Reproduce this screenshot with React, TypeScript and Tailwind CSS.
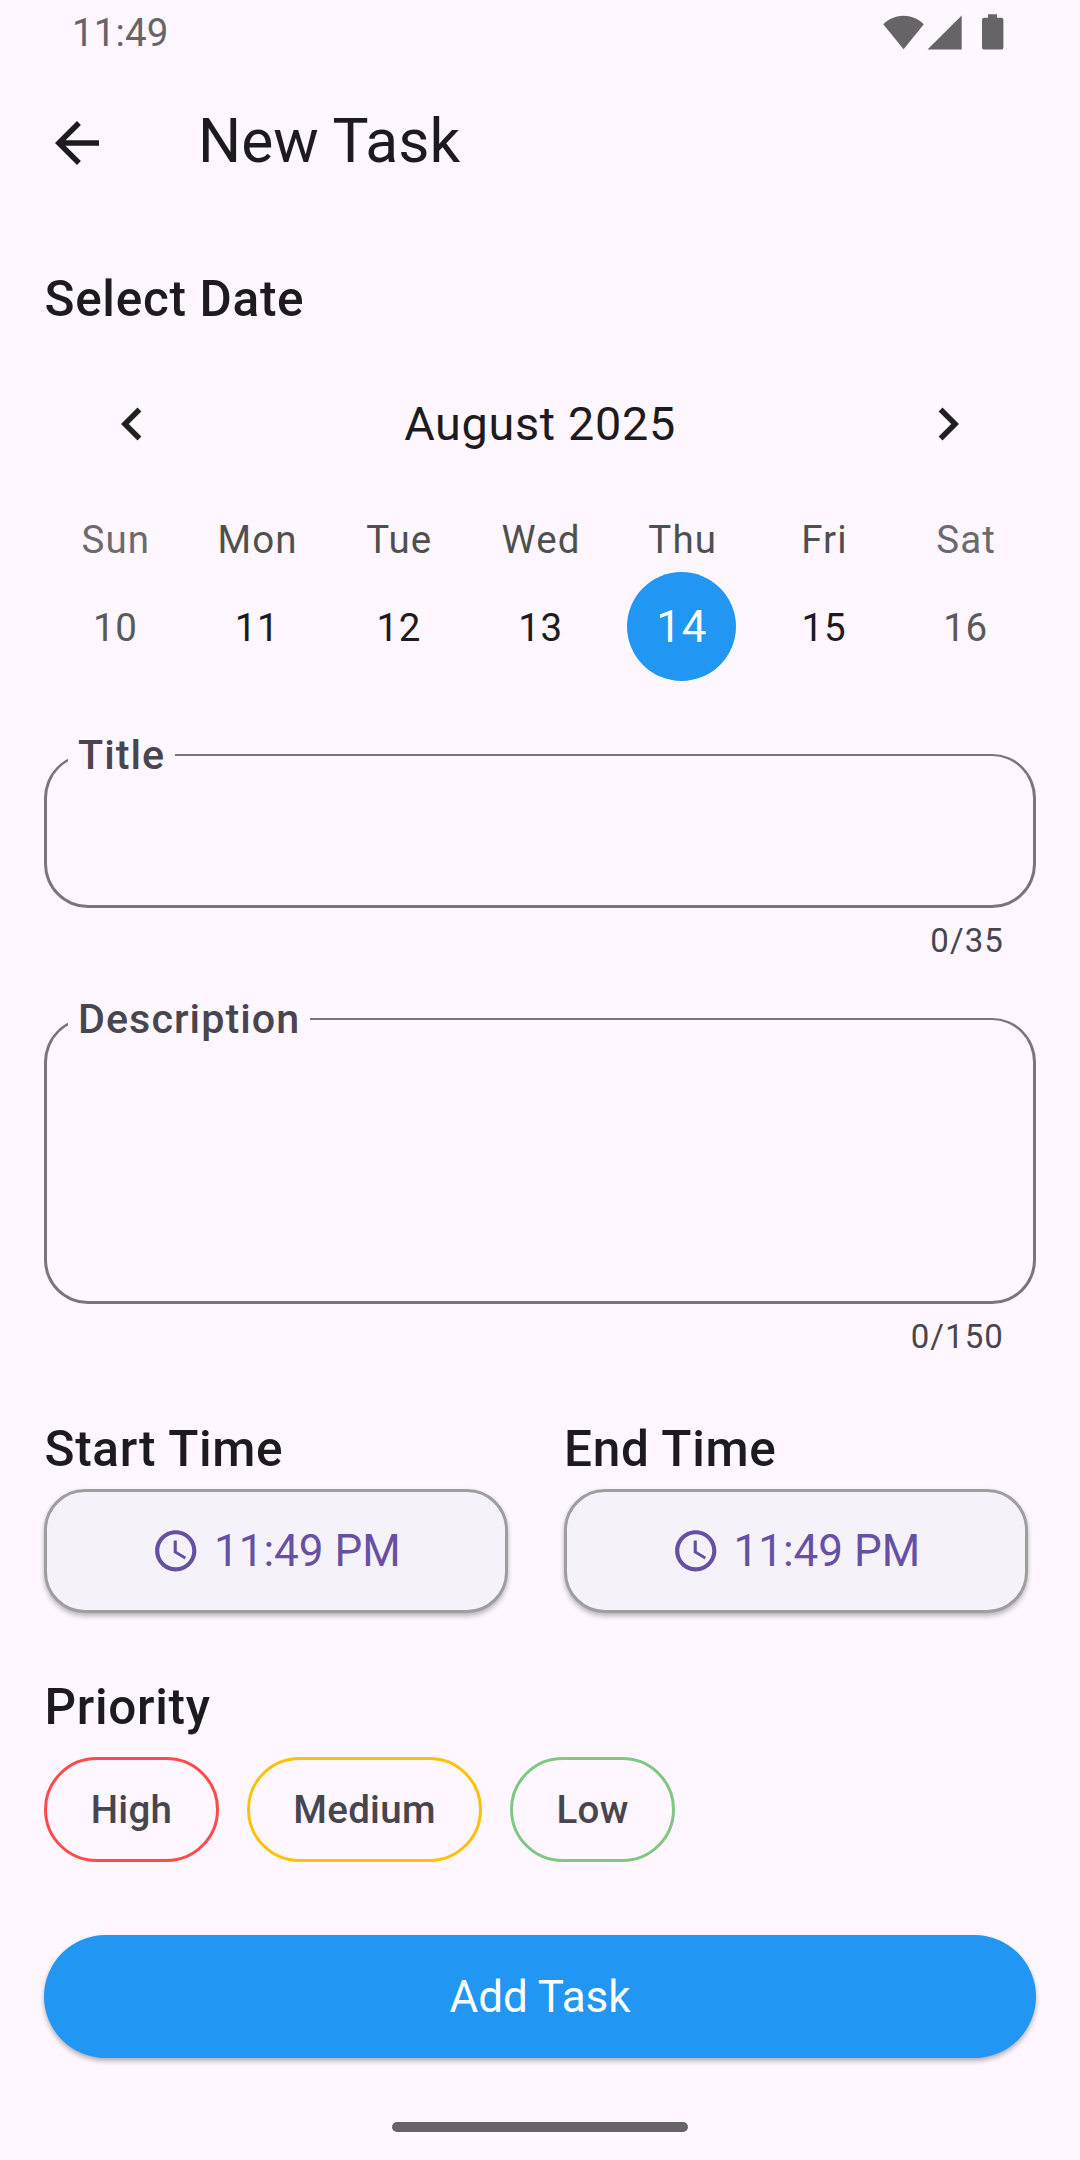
import type { ReactNode } from "react";

type Day = { name: string; date: string; weekend?: boolean; selected?: boolean };

const week: Day[] = [
  { name: "Sun", date: "10", weekend: true },
  { name: "Mon", date: "11" },
  { name: "Tue", date: "12" },
  { name: "Wed", date: "13" },
  { name: "Thu", date: "14", selected: true },
  { name: "Fri", date: "15" },
  { name: "Sat", date: "16", weekend: true },
];

function MaterialIcon({ d, className }: { d: string; className: string }) {
  return (
    <svg viewBox="0 0 24 24" fill="currentColor" className={className}>
      <path d={d} />
    </svg>
  );
}

function StatusBar() {
  return (
    <div className="flex h-[66px] items-center justify-between pl-[72px] pr-[76px] text-[#676467]">
      <span className="text-[38.5px] leading-[66px] tracking-[0.1px]">11:49</span>
      <svg viewBox="0 0 121 36" className="-mt-[2px] h-[36px] w-[121px]" fill="currentColor">
        <path d="M0.3 10.2 C11.5 -1.2 29.5 -1.2 40.8 10.2 L20.6 35.3 Z" />
        <path d="M44.5 35.6 L78.7 1.4 V35.6 Z" />
        <path d="M105 0.2h9v3.6h4.2a2.2 2.2 0 0 1 2.2 2.2v27.4a2.2 2.2 0 0 1-2.2 2.2h-17a2.2 2.2 0 0 1-2.2-2.2v-27.4a2.2 2.2 0 0 1 2.2-2.2h3.8z" />
      </svg>
    </div>
  );
}

function SectionTitle({ children, className = "" }: { children: ReactNode; className?: string }) {
  return (
    <h2 className={`h-[58px] pl-[0.5px] text-[49.5px] font-medium leading-[58px] tracking-[0.69px] ${className}`}>
      {children}
    </h2>
  );
}

function Field({ label, max, boxClass }: { label: string; max: number; boxClass: string }) {
  return (
    <div>
      <div
        className={`relative rounded-[44px] border-b-[3px] border-l-[3px] border-r-[3px] border-t-2 border-[#7a757d] ${boxClass}`}
      >
        <label className="absolute -top-[24px] left-[21px] bg-[#fef7ff] pl-[10px] pr-[10px] text-[41.25px] font-medium leading-[46px] tracking-[1.05px] text-[#49454f]">
          {label}
        </label>
      </div>
      <div className="mt-[12px] h-[41px] pr-[32px] text-right text-[33px] leading-[41px] tracking-[1.1px] text-[#49454f]">
        0/{max}
      </div>
    </div>
  );
}

function TimePicker({ label }: { label: string }) {
  return (
    <div className="w-[464px]">
      <SectionTitle>{label}</SectionTitle>
      <button className="mt-[11px] flex h-[124px] w-full items-center justify-center rounded-[41px] border-[3px] border-[#9e9e9e] bg-[#f6f2f9] text-[44px] text-[#6750a4] shadow-[0_3px_5px_rgba(0,0,0,0.28)]">
        <MaterialIcon
          className="mr-[13px] size-[49.5px]"
          d="M11.99 2C6.47 2 2 6.48 2 12s4.47 10 9.99 10C17.52 22 22 17.52 22 12S17.52 2 11.99 2zM12 20c-4.42 0-8-3.58-8-8s3.58-8 8-8 8 3.58 8 8-3.58 8-8 8zm.5-13H11v6l5.25 3.15.75-1.23-4.5-2.67z"
        />
        11:49 PM
      </button>
    </div>
  );
}

export default function App() {
  return (
    <div className="h-[2160px] w-[1080px] overflow-hidden bg-[#fef7ff] font-[Roboto,sans-serif] text-[#1d1b20]">
      <StatusBar />

      <header className="flex h-[154px] items-center pl-[44px]">
        <MaterialIcon className="size-[66px]" d="M20 11H7.83l5.59-5.59L12 4l-8 8 8 8 1.41-1.41L7.83 13H20v-2z" />
        <h1 className="-mt-[3px] ml-[88px] text-[60.5px] leading-[76px]">New Task</h1>
      </header>

      <main className="px-[44px]">
        <SectionTitle className="mt-[50px]">Select Date</SectionTitle>

        <div className="mt-[63px] flex h-[66px] items-center justify-between px-[55px]">
          <MaterialIcon
            className="size-[66px] text-[#212121]"
            d="M15.41 7.41 14 6l-6 6 6 6 1.41-1.41L10.83 12z"
          />
          <span className="text-[46.75px] leading-[66px] tracking-[0.69px]">August 2025</span>
          <MaterialIcon
            className="size-[66px] text-[#212121]"
            d="M10 6 8.59 7.41 13.17 12l-4.58 4.59L10 18l6-6z"
          />
        </div>

        <div className="mt-[60px] grid grid-cols-7">
          {week.map((d) => (
            <div key={d.name} className="flex flex-col items-center gap-[10px]">
              <span
                className={`pl-[2px] text-[38.5px] leading-[45px] tracking-[1.1px] ${d.weekend ? "text-[#6d6a6e]" : "text-[#4f4f4f]"}`}
              >
                {d.name}
              </span>
              <span
                className={`flex size-[109px] items-center justify-center rounded-full tracking-[0.69px] ${
                  d.selected
                    ? "bg-[#2196f3] text-[44px] text-[#fafafa]"
                    : d.weekend
                      ? "pl-px pt-[2px] text-[38.5px] text-[#5a5a5a]"
                      : "pl-px pt-[2px] text-[38.5px]"
                }`}
              >
                {d.date}
              </span>
            </div>
          ))}
        </div>

        <div className="mt-[73px]">
          <Field label="Title" max={35} boxClass="h-[154px]" />
        </div>
        <div className="mt-[57px]">
          <Field label="Description" max={150} boxClass="h-[286px]" />
        </div>

        <div className="mt-[63px] flex gap-[55.5px]">
          <TimePicker label="Start Time" />
          <TimePicker label="End Time" />
        </div>

        <SectionTitle className="mt-[65px]">Priority</SectionTitle>
        <div className="mt-[21px] flex gap-[28px] text-[38.5px] font-medium tracking-[0.275px] text-[#49454f]">
          <button className="h-[105px] w-[175px] rounded-full border-[3px] border-[#ff4b4b]">High</button>
          <button className="h-[105px] w-[235px] rounded-full border-[3px] border-[#ffc107]">Medium</button>
          <button className="h-[105px] w-[165px] rounded-full border-[3px] border-[#81c784]">Low</button>
        </div>

        <button className="mt-[73px] h-[123px] w-full rounded-full bg-[#2196f3] text-[44px] text-white shadow-[0_3px_5px_rgba(0,0,0,0.3)]">
          Add Task
        </button>
      </main>

      <div className="mx-auto mt-[64px] h-[10px] w-[296px] rounded-full bg-[#676467]" />
    </div>
  );
}
